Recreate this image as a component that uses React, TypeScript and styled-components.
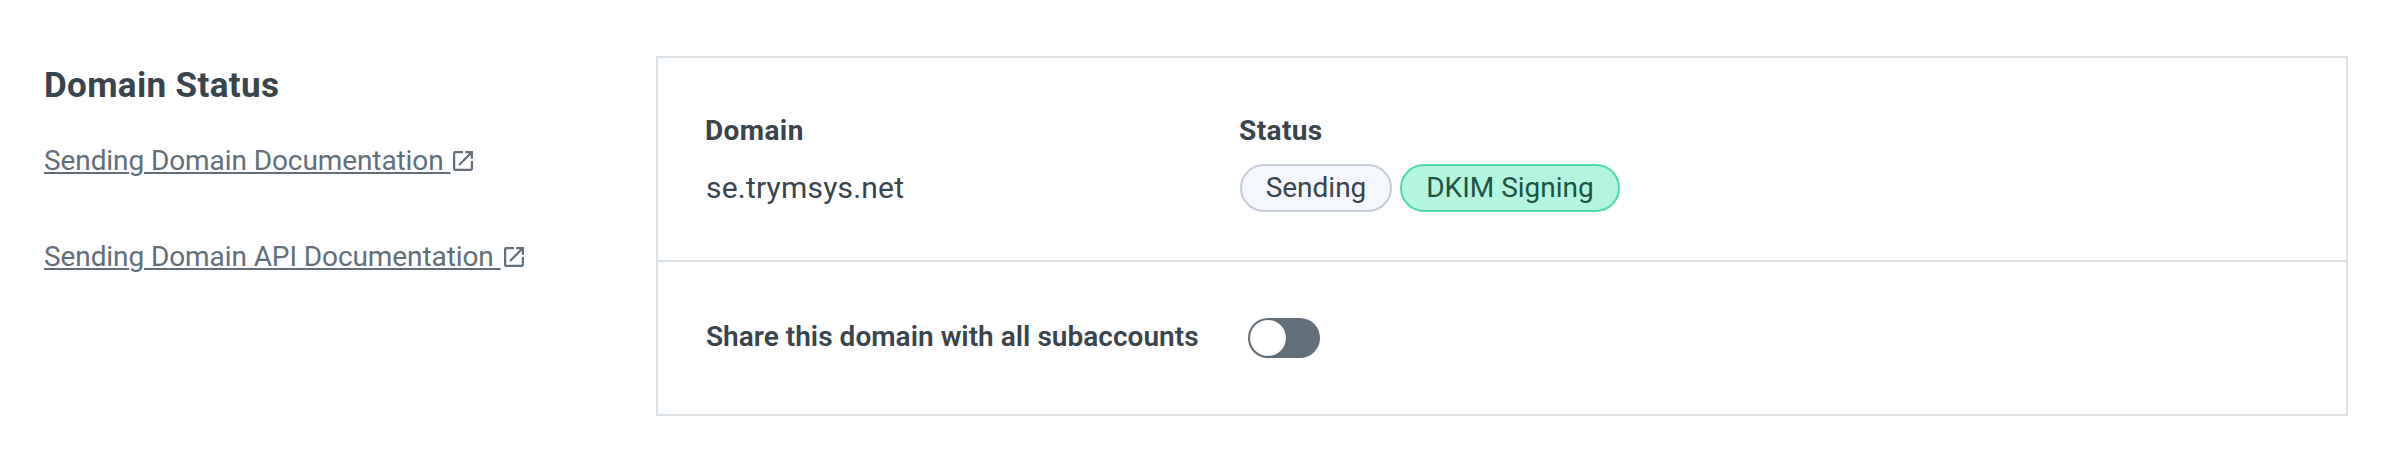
import React from "react";
import styled, { createGlobalStyle } from "styled-components";

const Global = createGlobalStyle`
  * { box-sizing: border-box; }
  body { margin: 0; background: #fff; color: #39444d; font-family: Roboto, "Liberation Sans", sans-serif; font-size: 28px; line-height: 48px; }
`;

const Page = styled.main`
  display: flex;
  height: 462px;
  padding: 56px 46px 46px 44px;
`;

const Aside = styled.aside`
  width: 612px;
  flex: none;
`;

const Title = styled.h2`
  margin: 6px 0 27px;
  font-size: 35px;
  font-weight: 700;
  line-height: 48px;
  letter-spacing: 0.35px;
`;

const DocLink = styled.a`
  display: flex;
  align-items: center;
  height: 48px;
  margin-bottom: 48px;
  color: #626f7a;
  white-space: pre;
`;

const LinkText = styled.span`
  letter-spacing: -0.09px;
  text-decoration: underline;
  text-decoration-thickness: 2px;
  text-underline-offset: 2px;
`;

const LinkIcon = styled.svg`
  width: 20px;
  height: 20px;
  margin-left: 3px;
`;

const Panel = styled.section`
  flex: 1;
  height: 360px;
  border: 2px solid #d9e0e6;
`;

const Details = styled.div`
  display: grid;
  grid-template-columns: 534px 1fr;
  height: 204px;
  padding: 49px 48px 0;
  border-bottom: 2px solid #d9e0e6;
`;

const Label = styled.div`
  height: 57px;
  margin-left: -1px;
  font-weight: 700;
  letter-spacing: 0.4px;
`;

const Value = styled.div`
  font-size: 30px;
  letter-spacing: 0.2px;
`;

const Pills = styled.div`
  display: flex;
  gap: 8px;
`;

const Pill = styled.span<{ $tone: "neutral" | "success" }>`
  display: flex;
  align-items: center;
  justify-content: center;
  width: ${(p) => (p.$tone === "success" ? 220 : 152)}px;
  height: 48px;
  border: 2px solid ${(p) => (p.$tone === "success" ? "#50d9ac" : "#c4cdd8")};
  border-radius: 24px;
  background: ${(p) => (p.$tone === "success" ? "#b4f5df" : "#f4f7fb")};
  color: ${(p) => (p.$tone === "success" ? "#1d5443" : "#39444d")};
`;

const ShareRow = styled.div`
  display: flex;
  align-items: center;
  height: 152px;
  padding: 0 48px;
`;

const ShareLabel = styled.span`
  width: 542px;
  padding-bottom: 2px;
  font-weight: 600;
  letter-spacing: 0.03px;
`;

const Toggle = styled.button`
  width: 72px;
  height: 40px;
  padding: 2px;
  border: 0;
  border-radius: 20px;
  background: #626f7a;
`;

const Knob = styled.span`
  display: block;
  width: 36px;
  height: 36px;
  border-radius: 50%;
  background: #fff;
  box-shadow: 0 1px 3px rgba(57, 68, 77, 0.3);
`;

const OpenInNew = () => (
  <LinkIcon viewBox="3 3 18 18" fill="currentColor" aria-hidden="true">
    <path d="M19 19H5V5h7V3H5a2 2 0 0 0-2 2v14a2 2 0 0 0 2 2h14c1.100 0 2-.9 2-2v-7h-2v7zM14 3v2h3.590l-9.830 9.830 1.410 1.410L19 6.410V10h2V3h-7z" />
  </LinkIcon>
);

export default function App() {
  return (
    <>
      <Global />
      <Page>
        <Aside>
          <Title>Domain Status</Title>
          <DocLink>
            <LinkText>Sending Domain Documentation </LinkText>
            <OpenInNew />
          </DocLink>
          <DocLink>
            <LinkText>Sending Domain API Documentation </LinkText>
            <OpenInNew />
          </DocLink>
        </Aside>
        <Panel>
          <Details>
            <div>
              <Label>Domain</Label>
              <Value>se.trymsys.net</Value>
            </div>
            <div>
              <Label>Status</Label>
              <Pills>
                <Pill $tone="neutral">Sending</Pill>
                <Pill $tone="success">DKIM Signing</Pill>
              </Pills>
            </div>
          </Details>
          <ShareRow>
            <ShareLabel>Share this domain with all subaccounts</ShareLabel>
            <Toggle role="switch" aria-checked="false" aria-label="Share this domain with all subaccounts">
              <Knob />
            </Toggle>
          </ShareRow>
        </Panel>
      </Page>
    </>
  );
}
